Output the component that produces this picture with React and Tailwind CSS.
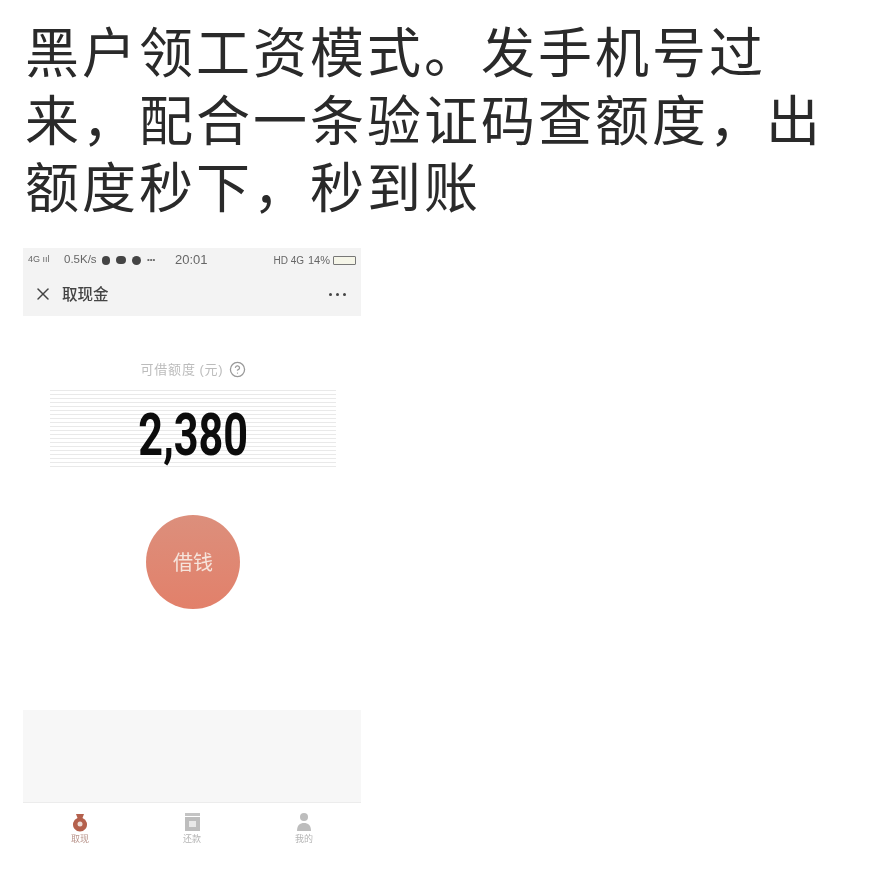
import { X, CircleHelp } from 'lucide-react';

const CJK = 'font-["Noto_Sans_CJK_SC",sans-serif]';

function TabIcon({ children, label, active }) {
  return (
    <div className="flex flex-col items-center w-[40px]">
      <svg width="22" height="22" viewBox="0 0 22 22">{children}</svg>
      <span className={`text-[9px] leading-[11px] ${active ? 'text-[#b9958c]' : 'text-[#b5b5b5]'}`}>{label}</span>
    </div>
  );
}

export default function App() {
  return (
    <div className={`w-[891px] h-[895px] bg-white overflow-hidden ${CJK}`}>
      <h1 className="pt-[16px] pl-[25px] w-[860px] h-[220px] text-[54px] leading-[67.5px] tracking-[3px] font-normal text-[#2a2a2a]">
        黑户领工资模式。发手机号过<br />
        来，配合一条验证码查额度，出<br />
        额度秒下，秒到账
      </h1>

      <div className="mt-[28px] ml-[23px] w-[338px] blur-[0.7px]">
        <div className="bg-[#f3f3f3] h-[68px] text-[#666]">
          <div className="h-[24px] px-[5px] flex items-center text-[11.5px] font-['Liberation_Sans',sans-serif]">
            <span className="w-[36px] text-[9px]">4G ııl</span>
            <span className="w-[38px]">0.5K/s</span>
            <span className="flex items-center gap-[6px] w-[73px]">
              <span className="w-[8px] h-[9px] rounded-full bg-[#444]" />
              <span className="w-[10px] h-[8px] rounded-full bg-[#444]" />
              <span className="w-[9px] h-[9px] rounded-full bg-[#444]" />
              <span className="text-[8px] leading-none">•••</span>
            </span>
            <span className="text-[13px]">20:01</span>
            <span className="ml-auto text-[10px]">HD 4G</span>
            <span className="ml-[4px] text-[11px]">14%</span>
            <span className="ml-[3px] w-[23px] h-[9px] border border-[#777] rounded-[1px] bg-[#f5f5e8]" />
          </div>
          <div className="h-[44px] pl-[10px] pr-[15px] flex items-center text-[#444]">
            <X size={20} strokeWidth={1.8} />
            <span className="ml-[9px] text-[15.5px] font-medium">取现金</span>
            <span className="ml-auto flex gap-[4px]">
              <span className="w-[3px] h-[3px] rounded-full bg-[#444]" />
              <span className="w-[3px] h-[3px] rounded-full bg-[#444]" />
              <span className="w-[3px] h-[3px] rounded-full bg-[#444]" />
            </span>
          </div>
        </div>

        <div className="flex flex-col items-center pl-[2px]">
          <div className="mt-[43px] h-[20px] flex items-center gap-[5px] text-[13px] tracking-[0.8px] text-[#bcbcbc]">
            <span>可借额度 <span className="font-['Liberation_Sans',sans-serif]">(</span>元<span className="font-['Liberation_Sans',sans-serif]">)</span></span>
            <CircleHelp size={17} strokeWidth={1.8} className="text-[#999]" />
          </div>
          <div className="mt-[11px] w-[286px] h-[78px] flex items-center justify-center bg-[repeating-linear-gradient(to_bottom,#e9e9e9_0px,#e9e9e9_1px,#ffffff_1px,#ffffff_4px)]">
            <span className="mt-[12px] text-[60px] leading-none font-bold text-[#0c0c0c] scale-x-[0.72] font-['Roboto',sans-serif]">2,380</span>
          </div>
          <div className="mt-[47px] w-[94px] h-[94px] rounded-full flex items-center justify-center text-[20px] text-[#f6e4dc] bg-gradient-to-b from-[#dc8f7c] to-[#e2806a]">
            借钱
          </div>
        </div>

        <div className="mt-[101px] h-[93px] bg-[#f7f7f7] border-b border-[#ececec]" />

        <div className="h-[46px] pt-[8px] px-[37px] flex justify-between blur-[0.6px]">
          <TabIcon label="取现" active>
            <path d="M7 3h8l-1.5 4a7 7 0 1 1-5 0z" fill="#b4604c" />
            <circle cx="11" cy="13" r="2.5" fill="#eddcd6" />
          </TabIcon>
          <TabIcon label="还款">
            <rect x="4" y="2" width="15" height="3" fill="#c4c4c4" />
            <rect x="4" y="6" width="15" height="14" fill="#bdbdbd" />
            <rect x="8" y="10" width="7" height="6" fill="#e8e8e8" />
          </TabIcon>
          <TabIcon label="我的">
            <circle cx="11" cy="6" r="4" fill="#bdbdbd" />
            <path d="M4 20c0-6 3-8 7-8s7 2 7 8z" fill="#bdbdbd" />
          </TabIcon>
        </div>
      </div>
    </div>
  );
}
